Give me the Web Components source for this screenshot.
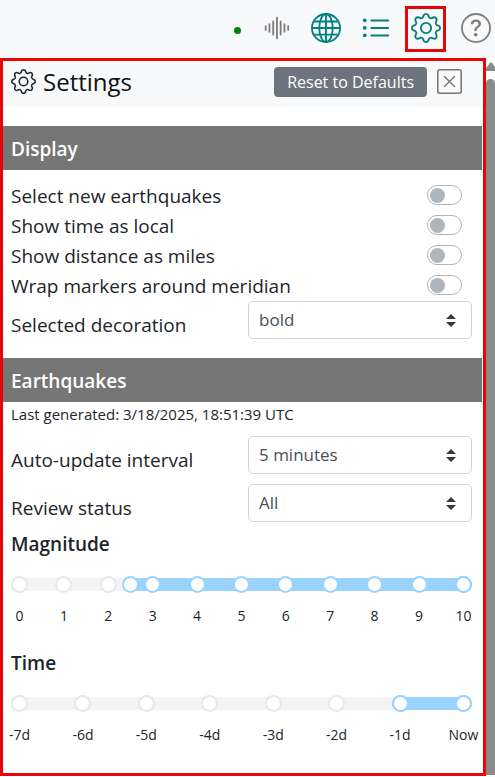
<!DOCTYPE html>
<html lang="en">
<head>
<meta charset="utf-8">
<meta name="viewport" content="width=device-width, initial-scale=1">
<title>Earthquake Settings</title>
<style>
  body { margin: 0; background: #fff; color: #212529; font: 19px/30px "Open Sans", "Noto Sans", sans-serif; }
</style>
</head>
<body>
<quake-app></quake-app>
<script>
const icons = {
  wave: '<path d="M2.5 7v2M4.5 6v4M6.5 4.5v7M8.5 2.5v11M10.5 4.5v7M12.5 6v4M14.5 7v2" stroke="currentColor" stroke-linecap="round"/>',
  globe: '<g fill="none" stroke="currentColor"><circle cx="8" cy="8" r="7.5"/><ellipse cx="8" cy="8" rx="3.6" ry="7.5"/><path d="M8 .5v15M.5 8h15M1.7 4.5h12.6M1.7 11.5h12.6"/></g>',
  list: '<g fill="currentColor"><circle cx="2" cy="3.9" r="1"/><circle cx="2" cy="7.9" r="1"/><circle cx="2" cy="11.9" r="1"/></g><path d="M5.5 4h9M5.5 8h9M5.5 12h9" stroke="currentColor" stroke-linecap="round"/>',
  gear: '<g fill="currentColor"><path d="M8 4.754a3.246 3.246 0 1 0 0 6.492 3.246 3.246 0 0 0 0-6.492zM5.754 8a2.246 2.246 0 1 1 4.492 0 2.246 2.246 0 0 1-4.492 0z"/><path d="M9.796 1.343c-.527-1.79-3.065-1.79-3.592 0l-.094.319a.873.873 0 0 1-1.255.52l-.292-.16c-1.64-.892-3.433.902-2.54 2.541l.159.292a.873.873 0 0 1-.52 1.255l-.319.094c-1.79.527-1.79 3.065 0 3.592l.319.094a.873.873 0 0 1 .52 1.255l-.16.292c-.892 1.64.901 3.434 2.541 2.54l.292-.159a.873.873 0 0 1 1.255.52l.094.319c.527 1.79 3.065 1.79 3.592 0l.094-.319a.873.873 0 0 1 1.255-.52l.292.16c1.64.893 3.434-.902 2.54-2.541l-.159-.292a.873.873 0 0 1 .52-1.255l.319-.094c1.79-.527 1.79-3.065 0-3.592l-.319-.094a.873.873 0 0 1-.52-1.255l.16-.292c.893-1.64-.902-3.433-2.541-2.54l-.292.159a.873.873 0 0 1-1.255-.52l-.094-.319zm-2.633.283c.246-.835 1.428-.835 1.674 0l.094.319a1.873 1.873 0 0 0 2.693 1.115l.291-.16c.764-.415 1.6.42 1.184 1.185l-.159.292a1.873 1.873 0 0 0 1.116 2.692l.318.094c.835.246.835 1.428 0 1.674l-.319.094a1.873 1.873 0 0 0-1.115 2.693l.16.291c.415.764-.42 1.6-1.185 1.184l-.291-.159a1.873 1.873 0 0 0-2.693 1.116l-.094.318c-.246.835-1.428.835-1.674 0l-.094-.319a1.873 1.873 0 0 0-2.692-1.115l-.292.16c-.764.415-1.6-.42-1.184-1.185l.159-.291A1.873 1.873 0 0 0 1.945 8.93l-.319-.094c-.835-.246-.835-1.428 0-1.674l.319-.094A1.873 1.873 0 0 0 3.06 4.377l-.16-.292c-.415-.764.42-1.6 1.185-1.184l.292.159a1.873 1.873 0 0 0 2.692-1.115l.094-.319z"/></g>',
  help: '<g fill="currentColor"><path d="M8 15A7 7 0 1 1 8 1a7 7 0 0 1 0 14zm0 1A8 8 0 1 0 8 0a8 8 0 0 0 0 16z"/><path d="M5.255 5.786a.237.237 0 0 0 .241.247h.825c.138 0 .248-.113.266-.25.09-.656.54-1.134 1.342-1.134.686 0 1.314.343 1.314 1.168 0 .635-.374.927-.965 1.371-.673.489-1.206 1.06-1.168 1.987l.003.217a.25.25 0 0 0 .25.246h.811a.25.25 0 0 0 .25-.25v-.105c0-.718.273-.927 1.01-1.486.609-.463 1.244-.977 1.244-2.056 0-1.511-1.276-2.241-2.673-2.241-1.267 0-2.655.59-2.75 2.286zm1.557 5.763c0 .533.425.927 1.01.927.609 0 1.028-.394 1.028-.927 0-.552-.42-.94-1.029-.94-.584 0-1.009.388-1.009.94z"/></g>',
  close: '<g fill="none" stroke="currentColor" stroke-linecap="round"><rect x=".5" y=".5" width="15" height="15" rx="1.2"/><path d="M4.8 4.8l6.4 6.4M11.2 4.8l-6.4 6.4" stroke-width=".9"/></g>'
};

class QuakeElement extends HTMLElement {
  render(html) {
    const t = document.createElement('template');
    t.innerHTML = html;
    (this.shadowRoot || this.attachShadow({ mode: 'open' })).replaceChildren(t.content.cloneNode(true));
  }
}

customElements.define('quake-icon', class extends QuakeElement {
  connectedCallback() {
    this.render(`<style>:host{display:block;width:30px;height:30px}svg{display:block;width:100%;height:100%}</style>
      <svg viewBox="0 0 16 16" aria-hidden="true">${icons[this.getAttribute('name')]}</svg>`);
  }
});

customElements.define('quake-toolbar', class extends QuakeElement {
  connectedCallback() {
    this.render(`<style>
      :host{display:flex;justify-content:flex-end;align-items:center;gap:20px;height:58px;padding:0 4px 2px;box-sizing:border-box;background:#f8f9fb;color:#008080}
      button{position:relative;padding:0;border:0;background:none;color:inherit}
      .gray{color:#808080}
      .status{width:7px;height:7px;border-radius:50%;background:#008000;margin-top:5px}
      .active::after{content:"";position:absolute;inset:-7px -5px -9px -6px;border:3px solid #e80505}
    </style>
    <span class="status" role="img" aria-label="Connected"></span>
    <button class="gray" aria-label="Live data"><quake-icon name="wave"></quake-icon></button>
    <button aria-label="Map"><quake-icon name="globe"></quake-icon></button>
    <button aria-label="List"><quake-icon name="list"></quake-icon></button>
    <button class="active" aria-label="Settings"><quake-icon name="gear"></quake-icon></button>
    <button class="gray" aria-label="Help"><quake-icon name="help"></quake-icon></button>`);
  }
});

customElements.define('settings-header', class extends QuakeElement {
  connectedCallback() {
    this.render(`<style>
      :host{display:flex;align-items:center;height:45px;padding:0 21px 4px 8px;box-sizing:border-box;background:#f8f9fb}
      .gear{width:25px;height:25px;margin-right:7px}
      h1{flex:1;margin:0;font-size:24px;font-weight:400;line-height:36px;color:#111}
      .reset{height:30px;margin-right:10px;padding:0 13px;border:0;border-radius:4px;background:#6c757d;color:#fff;font:16px/30px "Open Sans","Noto Sans",sans-serif}
      .close{padding:0;border:0;background:none;color:#777}
      .close quake-icon{width:25px;height:25px}
    </style>
    <quake-icon class="gear" name="gear"></quake-icon>
    <h1><slot></slot></h1>
    <button class="reset">Reset to Defaults</button>
    <button class="close" aria-label="Close"><quake-icon name="close"></quake-icon></button>`);
  }
});

customElements.define('settings-section', class extends QuakeElement {
  connectedCallback() {
    this.render(`<style>
      :host{display:block}
      h2{margin:0 1px 0 0;padding:2px 8px 0;background:#767676;color:#fff;font-size:19px;font-weight:600;line-height:42px}
      .body{padding:0 11px 0 8px}
    </style>
    <h2>${this.getAttribute('heading')}</h2><div class="body"><slot></slot></div>`);
  }
});

customElements.define('setting-switch', class extends QuakeElement {
  connectedCallback() {
    this.render(`<style>
      :host{display:block}
      label{display:flex;justify-content:space-between;align-items:center;padding-right:10px;line-height:30px}
      input{appearance:none;display:flex;align-items:center;width:35px;height:20px;margin:0 0 2px;padding:0 2px;box-sizing:border-box;border:1px solid #adb5bd;border-radius:10px;background:#fff}
      input::before{content:"";width:15px;height:15px;border-radius:50%;background:#adb5bd}
      input:checked{background:#9bd3ff;justify-content:flex-end}
      input:checked::before{background:#fff}
    </style>
    <label><span><slot></slot></span><input type="checkbox" role="switch"></label>`);
  }
});

customElements.define('setting-select', class extends QuakeElement {
  connectedCallback() {
    const options = this.getAttribute('options').split('|').map(o => `<option>${o}</option>`).join('');
    this.render(`<style>
      :host{display:block}
      .row{display:flex;justify-content:space-between;align-items:flex-start}
      label{padding-top:9px;line-height:30px}
      .field{display:grid;align-items:center;width:224px}
      select{grid-area:1/1;appearance:none;width:100%;height:38px;padding:0 30px 0 10px;border:1px solid #ced4da;border-radius:5px;background:#fff;color:#495057;font:17px/24px "Open Sans","Noto Sans",sans-serif}
      svg{grid-area:1/1;justify-self:end;width:10px;height:13px;margin-right:16px;pointer-events:none}
    </style>
    <div class="row"><label for="choice"><slot></slot></label>
      <div class="field"><select id="choice">${options}</select>
      <svg viewBox="0 0 10 13" fill="#343a40" aria-hidden="true"><path d="M0 5 5 0l5 5zM0 8h10l-5 5z"/></svg></div></div>`);
  }
});

customElements.define('range-slider', class extends QuakeElement {
  connectedCallback() {
    const labels = this.getAttribute('labels').split('|');
    const min = +this.getAttribute('min'), max = +this.getAttribute('max'), low = +this.getAttribute('low');
    const at = v => (v - min) / (max - min);
    const dots = labels.map((l, i) => `<i class="${i / (labels.length - 1) >= at(low) ? 'on' : ''}"></i>`).join('');
    const name = this.textContent.trim();
    this.render(`<style>
      :host{display:block;color:#212529}
      h3{margin:0;font-size:19px;font-weight:600;line-height:30px}
      .slider{display:grid;align-items:center;margin-top:17px;height:17px}
      .slider>*{grid-area:1/1}
      .track{height:13px;margin:0 8px;background:#f4f4f4}
      .fill{height:13px;margin-left:${at(low) * 100}%;background:#9bd3ff}
      .marks,.labels{display:flex;justify-content:space-between}
      i{box-sizing:border-box;width:17px;height:17px;border:2px solid #e8e8e8;border-radius:50%;background:#fff}
      i.on{border-color:#9bd3ff}
      input{appearance:none;width:100%;height:17px;margin:0;background:none;pointer-events:none}
      input::-webkit-slider-thumb{appearance:none;box-sizing:border-box;width:17px;height:17px;border:2px solid #9bd3ff;border-radius:50%;background:#fff;pointer-events:auto}
      .labels{margin-top:12px;font-size:14px;line-height:22px}
      .labels span{display:flex;justify-content:center;width:17px;white-space:nowrap}
    </style>
    <h3><slot></slot></h3>
    <div class="slider">
      <div class="track"><div class="fill"></div></div>
      <div class="marks">${dots}</div>
      <input type="range" aria-label="${name} from" min="${min}" max="${max}" step="0.5" value="${low}">
      <input type="range" aria-label="${name} to" min="${min}" max="${max}" step="0.5" value="${max}">
    </div>
    <div class="labels">${labels.map(l => `<span>${l}</span>`).join('')}</div>`);
  }
});

customElements.define('scroll-rail', class extends QuakeElement {
  connectedCallback() {
    this.render(`<style>
      :host{display:flex;flex-direction:column;width:9px;padding:4px 0 1px;box-sizing:border-box;overflow:hidden;background:#fcfcfc}
      svg{display:block;width:9px;height:9px;margin-bottom:8px}
      .thumb{flex:1;background:#8b8b8b;border-radius:5px 5px 0 0}
    </style>
    <svg viewBox="0 0 9 9" fill="#8b8b8b" aria-hidden="true"><path d="M4 1Q5-.5 6 1L9 5v4H0V6z"/></svg><div class="thumb"></div>`);
  }
});

customElements.define('quake-app', class extends QuakeElement {
  connectedCallback() {
    this.render(`<style>
      :host{display:block}
      .view{display:flex}
      main{flex:1;min-width:0;border:3px solid #e80505}
      .display{margin-top:20px}
      .switches{padding:11px 0 0}
      .quakes{margin-top:18px}
      .generated{margin:0;padding:1px 0 11px;font-size:15px;line-height:22px}
      .status{margin-top:9px}
      .magnitude{margin-top:6px}
      .time{margin:21px 0 27px}
    </style>
    <quake-toolbar></quake-toolbar>
    <div class="view">
      <main>
        <settings-header>Settings</settings-header>
        <settings-section class="display" heading="Display">
          <div class="switches">
            <setting-switch>Select new earthquakes</setting-switch>
            <setting-switch>Show time as local</setting-switch>
            <setting-switch>Show distance as miles</setting-switch>
            <setting-switch>Wrap markers around meridian</setting-switch>
          </div>
          <setting-select options="bold|italic|none">Selected decoration</setting-select>
        </settings-section>
        <settings-section class="quakes" heading="Earthquakes">
          <p class="generated">Last generated: 3/18/2025, 18:51:39 UTC</p>
          <setting-select options="5 minutes|10 minutes|30 minutes">Auto-update interval</setting-select>
          <setting-select class="status" options="All|Automatic|Reviewed">Review status</setting-select>
          <range-slider class="magnitude" min="0" max="10" low="2.5" labels="0|1|2|3|4|5|6|7|8|9|10">Magnitude</range-slider>
          <range-slider class="time" min="-7" max="0" low="-1" labels="-7d|-6d|-5d|-4d|-3d|-2d|-1d|Now">Time</range-slider>
        </settings-section>
      </main>
      <scroll-rail></scroll-rail>
    </div>`);
  }
});
</script>
</body>
</html>
